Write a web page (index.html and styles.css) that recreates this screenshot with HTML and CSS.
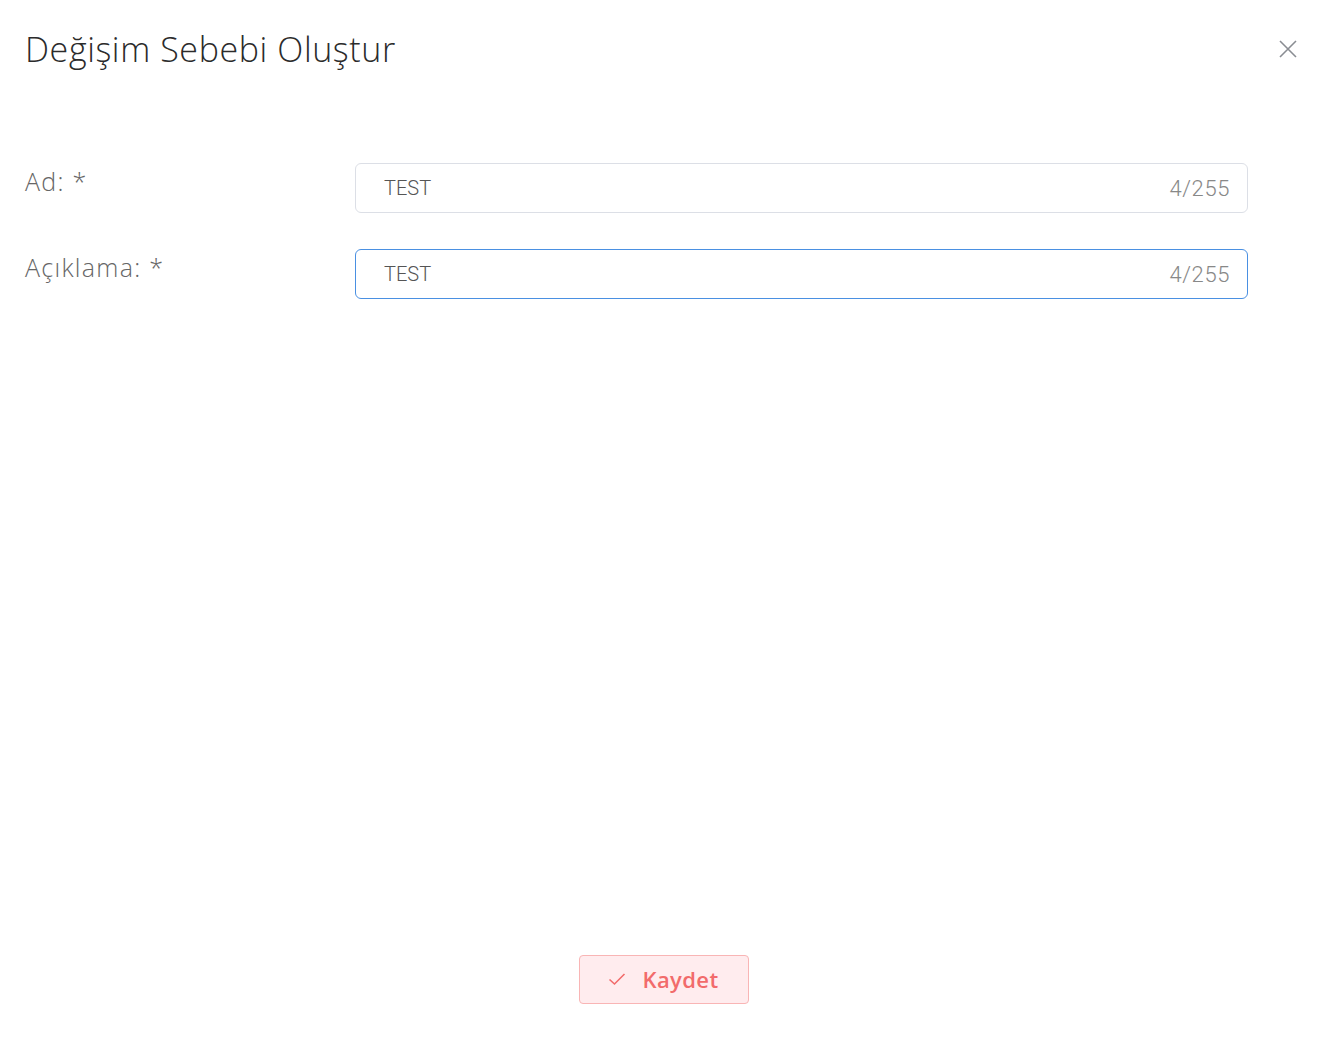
FILE: index.html
```html
<!DOCTYPE html>
<html lang="tr">
<head>
  <meta charset="UTF-8" />
  <meta name="viewport" content="width=device-width, initial-scale=1.0" />
  <title>Değişim Sebebi Oluştur</title>
  <link rel="stylesheet" href="styles.css">
</head>
<body>
  <div class="dialog">
    <header class="dialog-head">
      <h1>Değişim Sebebi Oluştur</h1>
      <button class="close-btn" aria-label="Kapat">
        <svg width="20" height="20" viewBox="0 0 20 20"><path d="M2 2 L18 18 M18 2 L2 18" stroke="#8a8d93" stroke-width="1.6" fill="none"/></svg>
      </button>
    </header>

    <form class="form">
      <div class="row">
        <label>Ad: *</label>
        <div class="field">
          <input type="text" value="TEST" />
          <span class="count">4/255</span>
        </div>
      </div>
      <div class="row">
        <label>Açıklama: *</label>
        <div class="field focused">
          <input type="text" value="TEST" />
          <span class="count">4/255</span>
        </div>
      </div>
    </form>

    <footer class="dialog-foot">
      <button class="save-btn">
        <svg width="18" height="14" viewBox="0 0 18 14"><path d="M1.5 7.5 L6.5 12 L16.5 2" stroke="#f26b6b" stroke-width="1.6" fill="none"/></svg>
        Kaydet
      </button>
    </footer>
  </div>
</body>
</html>
```

FILE: styles.css
```css
* { box-sizing: border-box; }
body {
  margin: 0;
  background: #fff;
  font-family: 'Open Sans', sans-serif;
  color: #333;
}
.dialog {
  height: 1048px;
  display: flex;
  flex-direction: column;
  padding: 26px 32px 44px 25px;
}
.dialog-head {
  display: flex;
  justify-content: space-between;
  align-items: flex-start;
}
.dialog-head h1 {
  margin: 0;
  font-size: 34px;
  font-weight: 300;
  color: #2b2b2b;
  letter-spacing: 0.6px;
}
.close-btn {
  background: none;
  border: none;
  padding: 0;
  margin-top: 13px;
  cursor: pointer;
}
.form {
  margin-top: 91px;
  display: flex;
  flex-direction: column;
  gap: 36px;
  flex: 1;
}
.row {
  display: flex;
  align-items: flex-start;
}
.row label {
  width: 330px;
  font-size: 25px;
  font-weight: 300;
  color: #666;
  letter-spacing: 1.3px;
  padding-top: 1px;
}
.field {
  width: 893px;
  height: 50px;
  border: 1px solid #dcdfe6;
  border-radius: 6px;
  display: flex;
  align-items: center;
  padding: 0 17px 0 28px;
}
.field.focused { border-color: #4a90e2; }
.field input {
  flex: 1;
  border: none;
  outline: none;
  font-family: 'Roboto', sans-serif;
  font-size: 20px;
  font-weight: 300;
  color: #555;
  background: transparent;
  padding: 0;
}
.count {
  font-family: 'Roboto', sans-serif;
  font-size: 22px;
  font-weight: 300;
  color: #888;
  letter-spacing: 0.6px;
}
.dialog-foot {
  display: flex;
  justify-content: center;
  padding-left: 4px;
}
.save-btn {
  width: 170px;
  height: 49px;
  display: flex;
  align-items: center;
  justify-content: center;
  gap: 16px;
  padding-bottom: 3px;
  background: #ffecee;
  border: 1px solid #f9b5b5;
  border-radius: 4px;
  color: #f26b6b;
  font-family: 'Open Sans', sans-serif;
  font-size: 22px;
  font-weight: 600;
  letter-spacing: 0.4px;
  cursor: pointer;
}
```
